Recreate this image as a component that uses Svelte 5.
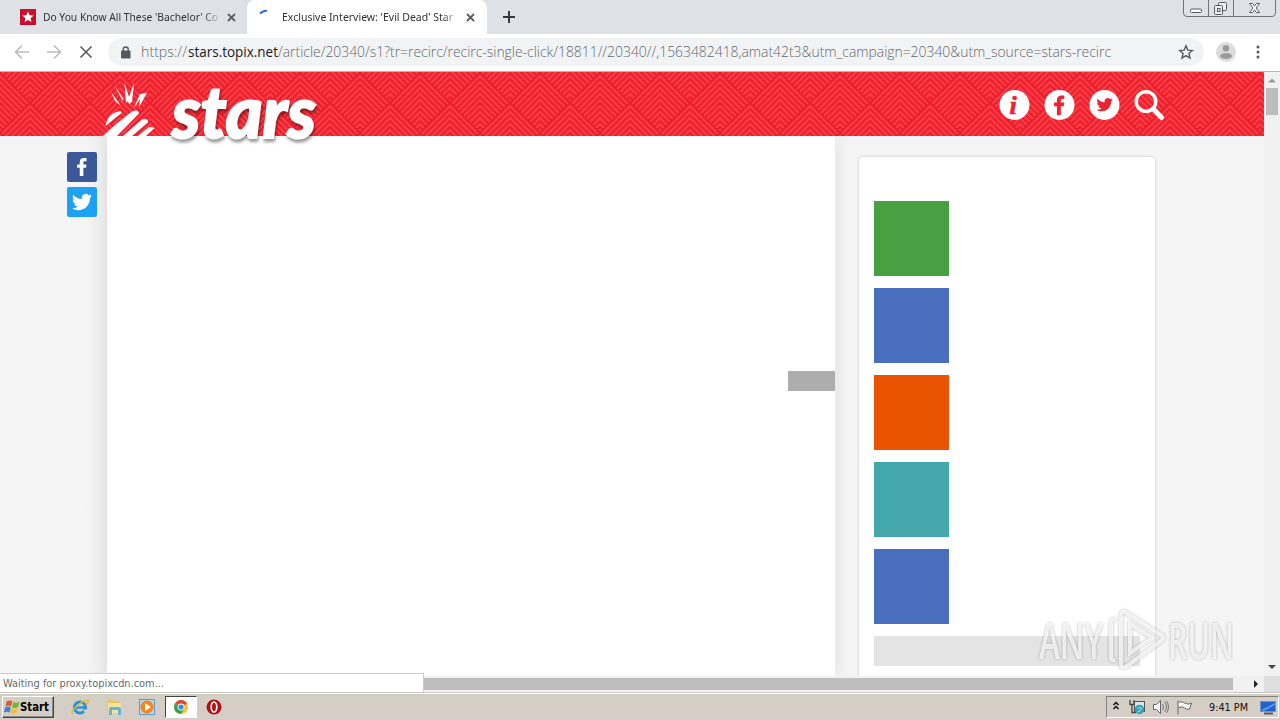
<script>
  const chevrons = [];
  for (const [ox, oy] of [[0, 0], [-30, -30], [30, -30], [-30, 30], [30, 30]]) {
    for (let k = 0; k < 10; k++) {
      chevrons.push(`M${ox + 3 * k} ${oy + 30 + 3 * k}L${ox + 30} ${oy + 6 * k}L${ox + 60 - 3 * k} ${oy + 30 + 3 * k}`);
    }
  }
  const weave = chevrons.join('');
  const tiles = ['#48a040', '#4a6ebe', '#ea5300', '#42a8ab', '#4a6ebe'];
  const bird = 'M23.95 4.57a10 10 0 0 1-2.82.77 4.96 4.96 0 0 0 2.16-2.72c-.95.55-2 .95-3.13 1.19a4.92 4.92 0 0 0-8.38 4.48C7.69 8.1 4.07 6.13 1.64 3.16a4.92 4.92 0 0 0 1.52 6.57 4.9 4.9 0 0 1-2.23-.61v.06a4.92 4.92 0 0 0 3.95 4.83 5 5 0 0 1-2.21.08 4.94 4.94 0 0 0 4.6 3.42A9.87 9.87 0 0 1 0 19.54a13.94 13.94 0 0 0 7.55 2.21c9.05 0 14-7.5 14-13.99l-.02-.63a9.94 9.94 0 0 0 2.42-2.56z';
  const fb = 'M9 24V13H5.5V8.5H9V5.8C9 2 11 0 14.7 0H18v4.4h-2.2c-1.7 0-2 .8-2 2v2.1H18L17.4 13h-3.6v11z';
</script>

<div class="screen">
  <div class="tabs">
    <div class="tab first">
      <svg width="16" height="16" viewBox="0 0 16 16"><rect width="16" height="16" fill="#c9102c" /><path d="M8 2.6l1.6 3.7 4 .3-3 2.6.9 3.9L8 11l-3.5 2.1.9-3.9-3-2.6 4-.3z" fill="#fff" /></svg>
      <svg class="title" width="178" height="20"><text x="0" y="14" textLength="175" lengthAdjust="spacingAndGlyphs">Do You Know All These 'Bachelor' Co</text></svg>
      <svg class="close" width="9" height="9" viewBox="0 0 9 9"><path d="M1 1l7 7M8 1L1 8" /></svg>
    </div>
    <div class="tab active">
      <svg width="16" height="16" viewBox="0 0 16 16"><path d="M1 4.5Q4 1.3 8 1.7" fill="none" stroke="#3468d8" stroke-width="2" /></svg>
      <svg class="title" width="178" height="20"><text x="0" y="14" textLength="171" lengthAdjust="spacingAndGlyphs">Exclusive Interview: 'Evil Dead' Star</text></svg>
      <svg class="close" width="9" height="9" viewBox="0 0 9 9"><path d="M1 1l7 7M8 1L1 8" /></svg>
    </div>
    <svg class="plus" width="12" height="12"><path d="M6 0v12M0 6h12" stroke="#35383c" stroke-width="2" /></svg>
    <svg class="winbtns" width="94" height="18" fill="none" stroke="#6f747c">
      <path d="M.5 0v13q0 3.5 3.500 3.500h85q3.500 0 3.500-3.500V0M25.500 0v16.500M50.500 0v16.500" />
      <rect x="7.500" y="9" width="11" height="3.500" rx="1" stroke="#555b66" fill="#fff" />
      <g stroke="#555b66" fill="#eef0f3"><rect x="35.500" y="2.500" width="8" height="8" rx="1" /><rect x="31.500" y="5.500" width="8" height="9" rx="1" /><rect x="34.500" y="8.500" width="2.500" height="3" /></g>
      <path d="M66.500 3.500h3l2 2.500 2-2.500h3l-3.400 4.500 3.400 4.500h-3l-2-2.500-2 2.500h-3l3.400-4.500z" stroke="#555b66" fill="#fff" />
    </svg>
  </div>

  <div class="toolbar">
    <svg width="108" height="37" fill="none" stroke-width="1.600">
      <path d="M29 18H16M22 11.500L15.500 18l6.500 6.500M47 18h13M54 11.500l6.500 6.500-6.500 6.500" stroke="#b8babd" />
      <path d="M80.500 12.500l11 11M91.500 12.500l-11 11" stroke="#5a5e63" />
    </svg>
    <div class="omni">
      <svg width="10" height="13" viewBox="0 0 10 13"><rect x="0" y="4.500" width="9.500" height="8" rx="1" fill="#55595e" /><path d="M2.200 5V3.500a2.500 2.500 0 0 1 5 0V5" fill="none" stroke="#55595e" stroke-width="1.400" /></svg>
      <svg class="url" width="1020" height="28"><text x="0" y="19" textLength="46" lengthAdjust="spacingAndGlyphs">https://</text><text class="host" x="47" y="19" textLength="90" lengthAdjust="spacingAndGlyphs">stars.topix.net</text><text x="137" y="19" textLength="833" lengthAdjust="spacingAndGlyphs">/article/20340/s1?tr=recirc/recirc-single-click/18811//20340//,1563482418,amat42t3&amp;utm_campaign=20340&amp;utm_source=stars-recirc</text></svg>
      <svg width="16" height="16" viewBox="0 0 16 16"><path d="M8 1.800l1.800 4.300 4.600.4-3.500 3 1.100 4.500L8 11.600 4 14l1.100-4.500-3.500-3 4.600-.4z" fill="none" stroke="#55595e" stroke-width="1.400" /></svg>
    </div>
    <svg class="user" width="20" height="20"><circle cx="10" cy="10" r="10" fill="#dcdcdc" /><circle cx="10" cy="6.200" r="3.200" fill="#9a9a9a" /><ellipse cx="10" cy="14" rx="6" ry="3" fill="#9a9a9a" /></svg>
    <svg width="4" height="16" fill="#55595e"><circle cx="2" cy="3" r="1.500" /><circle cx="2" cy="8" r="1.500" /><circle cx="2" cy="13" r="1.500" /></svg>
  </div>

  <div class="view">
    <div class="content">
      <header>
        <svg class="band" width="1264" height="90">
          <defs><pattern id="weave" width="60" height="60" patternUnits="userSpaceOnUse" patternTransform="translate(30 1)"><rect width="60" height="60" fill="#fb3c47" /><path d={weave} fill="none" stroke="#e9202b" stroke-width="2" /></pattern></defs>
          <rect width="1264" height="64" fill="url(#weave)" />
          <g fill="#fff">
            <path d="M103 64C112 55 124 46 132 39.500q6-3 7 2L117 64zM105.500 54q2-13 15-15l1 2zM123 64q10-9 19-16.500 6-2 6 3L132 64zM138 64l11-9q4 0 5.500 1L146 64z" />
            <path d="M126 31L124.500 11l4.500 14 5-14-2 19-3 2-1-3zM115 14l9 14-2-1 2 5zM111 20l10 14-6-5zM136 31l4-9 7-1-8 14 1-8-6 9z" />
          </g>
          <text class="logo" x="172" y="66" textLength="144" lengthAdjust="spacingAndGlyphs">stars</text>
          <g fill="#fff"><circle cx="1014.500" cy="33" r="15" /><circle cx="1059.500" cy="33" r="15" /><circle cx="1104.500" cy="33" r="15" /></g>
          <text class="info" x="1009.500" y="42">i</text>
          <path d={fb} transform="translate(1049.500 23.500) scale(.82)" fill="#ec2430" />
          <path d={bird} transform="translate(1096.500 24.500) scale(.68)" fill="#ec2430" />
          <circle cx="1146" cy="29.500" r="9.800" fill="none" stroke="#fff" stroke-width="3.400" /><path d="M1153.500 37l8 8.500" stroke="#fff" stroke-width="5" stroke-linecap="round" />
        </svg>
      </header>
      <div class="body">
        <div class="share">
          <div class="box fb"><svg width="20" height="18" viewBox="0 0 24 24"><path d={fb} fill="#fff" /></svg></div>
          <div class="box tw"><svg width="20" height="20" viewBox="0 0 24 24"><path d={bird} fill="#fff" /></svg></div>
        </div>
        <main><div class="ad"></div></main>
        <aside>
          {#each tiles as c}<div class="tile" style="background:{c}"></div>{/each}
          <div class="more"></div>
        </aside>
      </div>
    </div>
    <div class="vscroll">
      <svg width="16" height="16"><path d="M4 10.500h8L8 6.500z" fill="#999" /></svg>
      <div class="vthumb"></div>
      <svg class="down" width="16" height="16"><path d="M4 5h8l-4 4z" fill="#444" /></svg>
    </div>
  </div>

  <div class="hscroll"><div class="hthumb"></div><svg width="16" height="16"><path d="M6 4v8l4-4z" fill="#222" /></svg></div>

  <div class="taskbar">
    <div class="start">
      <svg width="16" height="16" viewBox="0 0 17 16"><path d="M3 2q3-2 6 0L7.500 7.500q-3-2-6-.3z" fill="#e4572c" /><path d="M10 2.500q3 2 6.500 0L15 8q-3.500 2-6.500 0z" fill="#75b73b" /><path d="M1.200 8.400q3-1.700 6 .2L5.800 14q-3-2-6 0z" fill="#3c83d3" /><path d="M8.300 9q3 2 6.500.1l-1.500 5.400q-3.500 2-6.500 0z" fill="#f6c22d" /></svg>
      <svg width="31" height="18"><text x="0" y="13" textLength="29" lengthAdjust="spacingAndGlyphs">Start</text></svg>
    </div>
    <div class="apps">
      <svg width="18" height="18" viewBox="0 0 18 18" fill="none"><circle cx="9" cy="9.500" r="5.500" stroke="#2793dc" stroke-width="3.200" /><path d="M4 9.500h10.500" stroke="#2793dc" stroke-width="2.400" /><path d="M13 13h4" stroke="#d6cfc6" stroke-width="3" /><path d="M2 16Q-1 14 6 8t11-6q1 2-2 5" stroke="#e8b92e" stroke-width="1.500" /></svg>
      <svg width="18" height="18" viewBox="0 0 18 18"><path d="M2 3l5-2 1 2h7v12H2z" fill="#e9c561" /><path d="M3 5h13v10H3z" fill="#f8e59d" /><path d="M4 17v-6q0-2 2-2h8q2 0 2 2v6h-3v-5H7v5z" fill="#61b5dc" /></svg>
      <svg width="18" height="18" viewBox="0 0 18 18"><rect x="1.500" y="1.500" width="15" height="15" fill="#b8d5ee" stroke="#629cd0" /><circle cx="9" cy="9" r="6.500" fill="#f38718" /><path d="M7 5l6 4-6 4z" fill="#fff" /></svg>
      <div class="running"><svg width="14" height="14" viewBox="0 0 14 14"><circle cx="7" cy="7" r="7" fill="#f2c430" /><path d="M7 7L.94 3.500A7 7 0 0 1 13.060 3.500z" fill="#df4637" /><path d="M7 7L.94 3.500A7 7 0 0 0 7 14l3-5z" fill="#3ba357" /><circle cx="7" cy="7" r="3.400" fill="#fff" /><circle cx="7" cy="7" r="2.600" fill="#4286ed" /></svg></div>
      <svg width="16" height="16" viewBox="0 0 16 16"><circle cx="8" cy="8" r="7.500" fill="#b20f16" /><ellipse cx="8" cy="8" rx="2.800" ry="5" fill="#b20f16" stroke="#fff" stroke-width="1.700" /></svg>
    </div>
    <div class="tray">
      <svg width="170" height="22" fill="none">
        <path d="M6.500 8L9 5.500 11.500 8M6.500 12L9 9.500l2.500 2.500" stroke="#111" stroke-width="1.500" />
        <rect x="27.500" y="4.500" width="10" height="10" fill="#d9e7e8" stroke="#555" /><path d="M23 3v4.500h4V3M25 7.500v8h4" stroke="#444" stroke-width="1.300" /><circle cx="32.500" cy="12.500" r="4.700" fill="#31a0b0" /><path d="M30.500 12q2.500-4 4 0-2 3-4 3" stroke="#c7f0f0" />
        <path d="M46.500 7.500h3l4-4v13l-4-4h-3z" fill="#fff" stroke="#666" /><path d="M55.500 7q2 3 0 6M57.500 5q4 5 0 10M59.500 4q4 6 0 12" stroke="#777" />
        <path d="M71 3.500v14M71.500 5q4-1 7 1.500 3 1.500 6-.5l-2 6q-3 1-5-1t-6-.5" fill="#fff" stroke="#666" />
        <text x="102" y="14" textLength="39" lengthAdjust="spacingAndGlyphs">9:41 PM</text>
        <rect x="153.500" y="4.500" width="15" height="10" fill="#2262cd" stroke="#7094c2" /><path d="M154 13l14-7v2l-11 6z" fill="#5499ed" /><path d="M157 16.500h9" stroke="#4b5d75" stroke-width="2" />
      </svg>
    </div>
  </div>

  <div class="status"><svg width="200" height="18"><text x="3" y="13" textLength="161" lengthAdjust="spacingAndGlyphs">Waiting for proxy.topixcdn.com...</text></svg></div>
  <svg class="mark" width="204" height="70" viewBox="0 0 204 70">
    <text x="2" y="55" textLength="64" lengthAdjust="spacingAndGlyphs">ANY</text>
    <text x="131" y="55" textLength="66" lengthAdjust="spacingAndGlyphs">RUN</text>
    <path d="M88 8l36 23q4 3 0 6L90 62q-6 4-6-3V12q0-5 4-4zM78 16q-4-1-4 3v34q0 4 4 3M93 20v29l22-15z" />
  </svg>
</div>

<style>
  :global(body) { margin: 0; overflow: hidden; }
  .screen { position: relative; width: 1280px; height: 720px; display: flex; flex-direction: column; overflow: hidden; background: #fff; font-family: "DejaVu Sans Condensed", "Noto Sans", sans-serif; }
  svg { display: block; flex: none; }
  .tabs { height: 34px; display: flex; background: #dee1e6; flex: none; }
  .tab { height: 34px; display: flex; align-items: center; box-sizing: border-box; }
  .first { width: 247px; padding-left: 20px; gap: 6.500px; }
  .active { width: 240px; background: #fff; border-radius: 8px 8px 0 0; padding-left: 12px; gap: 6.500px; }
  .title { overflow: visible; font-family: "Noto Sans", sans-serif; font-size: 11.500px; fill: #303236; -webkit-mask-image: linear-gradient(90deg, #000 90%, transparent 100%); mask-image: linear-gradient(90deg, #000 90%, transparent 100%); }
  .close { fill: none; stroke: #5b5e62; stroke-width: 1.800; }
  .plus { margin: 11px 0 0 16px; }
  .winbtns { margin-left: auto; margin-right: 3px; }
  .toolbar { height: 36px; padding-bottom: 1px; box-sizing: border-box; height: 38px; flex: none; display: flex; align-items: center; background: #fff; border-bottom: 1px solid #b9b5b2; }
  .omni { width: 1096px; height: 28px; background: #f1f3f4; border-radius: 14px; display: flex; align-items: center; box-sizing: border-box; padding-left: 13px; }
  .url { margin-left: 10px; margin-right: 17px; font: 300 14px "Open Sans", sans-serif; fill: #64696e; }
  .host { fill: #181a1c; font-weight: 400; }
  .user { margin: 0 20px 0 12px; }
  .view { height: 604px; flex: none; display: flex; }
  .content { width: 1264px; height: 604px; overflow: hidden; background: #f5f5f5; }
  header { height: 64px; position: relative; z-index: 2; }
  .logo { font: italic 900 72px Lato, sans-serif; fill: #fff; stroke: #fff; stroke-width: 2; filter: drop-shadow(1px 3px 1.500px rgba(0, 0, 0, .4)); }
  .info { font: italic 700 26px "Liberation Serif", serif; fill: #ec2430; stroke: #ec2430; stroke-width: .7; }
  .body { height: 540px; display: flex; }
  .share { width: 107px; box-sizing: border-box; padding: 16px 0 0 67px; display: flex; flex-direction: column; gap: 5px; background: linear-gradient(90deg, #f5f5f5 80%, #eaeaea); }
  .box { width: 30px; height: 30px; border-radius: 2px; display: flex; align-items: center; justify-content: center; }
  .fb { background: #3b5998; }
  .tw { background: #1da1f2; }
  main { width: 728px; background: #fff; box-shadow: 3px 0 18px rgba(0, 0, 0, .08); }
  .ad { width: 47px; height: 20px; margin: 235px 0 0 auto; background: #adadad; }
  aside { width: 281px; height: 560px; margin: 20px 0 0 23px; padding: 43px 0 0 15px; border: 1px solid #e3e3e3; border-radius: 5px; background: #fff; box-shadow: 0 0 0 1px #ececec; display: flex; flex-direction: column; gap: 12px; padding-top: 44px; flex: none; }
  .tile { width: 75px; height: 75px; flex: none; }
  .more { width: 266px; height: 30px; background: #e4e4e4; flex: none; }
  .vscroll { width: 16px; background: #f1f1f1; display: flex; flex-direction: column; }
  .vthumb { width: 12px; height: 27px; background: #bdbdbd; margin-left: 2px; }
  .down { margin-top: auto; }
  .hscroll { height: 16px; flex: none; display: flex; align-items: center; background: linear-gradient(90deg, #f1f1f1 1264px, #dedede 1264px); }
  .hthumb { width: 1231px; height: 12px; margin-left: 2px; margin-right: 15px; background: #bdbdbd; }
  .taskbar { height: 28px; box-sizing: border-box; flex: none; display: flex; align-items: flex-start; border-top: 1px solid #c9c9c2; box-shadow: inset 0 1px #fff; background: linear-gradient(#d3cfc2, #d6cdc8); }
  .start { width: 52px; height: 22px; box-sizing: border-box; margin: 3px 0 0 2px; display: flex; align-items: center; gap: 0; padding-left: 1px; border: 1px solid; border-color: #fff #444 #444 #fff; box-shadow: inset -1px -1px #8d8983; font: 700 11.500px "DejaVu Sans Condensed", sans-serif; }
  .apps { height: 28px; margin-left: 17px; display: flex; align-items: center; gap: 15.500px; }
  .running { width: 32px; height: 22px; box-sizing: border-box; border: 1px solid; border-color: #444 #fff #fff #444; background: #fff; display: flex; align-items: center; justify-content: center; margin: 0 -6px 0 -7px; }
  .tray { margin: 3px 1px 0 auto; width: 173px; height: 22px; box-sizing: border-box; border: 1px solid; border-color: #85817b #fff #fff #85817b; font-size: 11px; }
  .tray text { fill: #111; }
  .status { position: absolute; left: 0; top: 673px; width: 424px; height: 19px; box-sizing: border-box; background: #fff; border: 1px solid #ccc; border-left: 0; border-bottom: 0; font: 11px "DejaVu Sans Condensed", sans-serif; }
  .status text { fill: #65696d; }
  .mark { position: absolute; left: 1037px; top: 604px; fill: none; stroke: rgba(255, 255, 255, .75); stroke-width: 4; filter: drop-shadow(0 0 1.500px rgba(0, 0, 0, .35)); }
  .mark text { font: 600 50px "Open Sans", sans-serif; fill: rgba(255, 255, 255, .75); stroke: none; }
</style>
